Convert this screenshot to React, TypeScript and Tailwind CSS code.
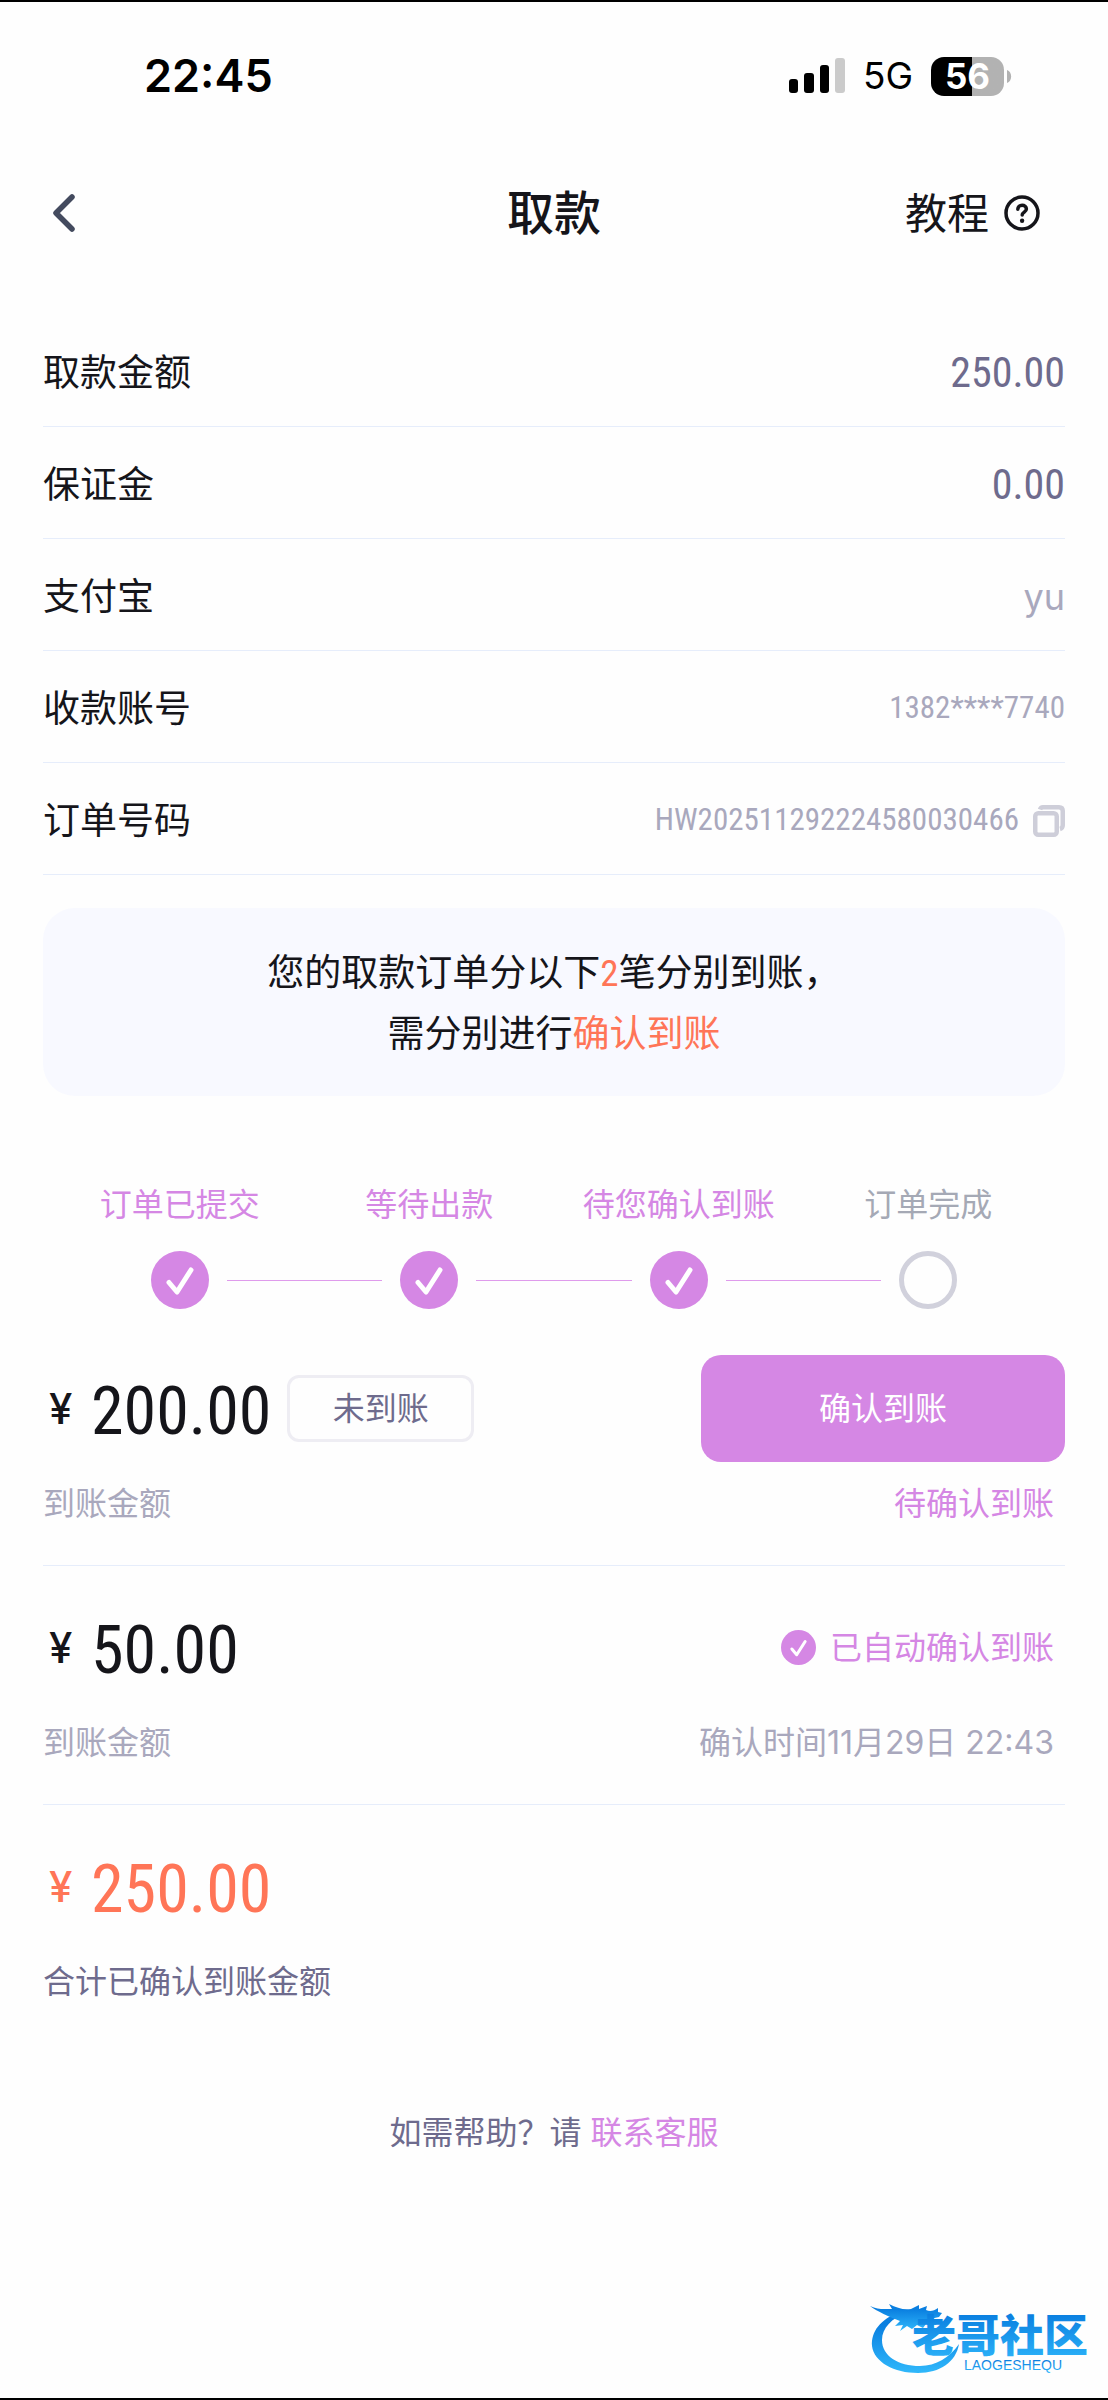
import type { ReactNode } from 'react';

type Step = { label: string; done: boolean };

const steps: Step[] = [
  { label: '订单已提交', done: true },
  { label: '等待出款', done: true },
  { label: '待您确认到账', done: true },
  { label: '订单完成', done: false },
];

// Condensed face used for money and order numbers
const digits = "font-['Roboto_Condensed','Open_Sans_Condensed','Noto_Sans_ExtraCondensed','Roboto',sans-serif]";

function StatusBar() {
  return (
    <div className="flex h-[150px] items-center justify-between border-t-2 border-black pr-24 pl-36 text-black">
      <span className="text-[45px] font-semibold">22:45</span>
      <div className="flex items-center">
        <svg width="56" height="36" viewBox="0 0 56 36" aria-hidden="true">
          <rect x="0" y="21" width="9" height="14" rx="3" />
          <rect x="15" y="15" width="10" height="20" rx="3" />
          <rect x="31" y="7" width="9" height="28" rx="3" />
          <rect x="46" y="0" width="10" height="35" rx="3" fill="#cbcbcb" />
        </svg>
        <span className="ml-[18px] text-[37px]">5G</span>
        <span className="ml-[18px] flex h-[39px] w-[73px] items-center justify-center rounded-[13px] bg-linear-to-r from-black from-56% to-[#b2b2b2] to-56% text-[35px] leading-[39px] font-bold text-white">
          56
        </span>
        <svg className="ml-[3px]" width="5" height="13" viewBox="0 0 5 13" fill="#b2b2b2" aria-hidden="true">
          <path d="M0 0c5.500 1.500 5.500 11.500 0 13z" />
        </svg>
      </div>
    </div>
  );
}

function Header() {
  return (
    <header className="grid h-[126px] grid-cols-3 items-center px-11 text-[#15151a]">
      <button type="button" aria-label="返回" className="justify-self-start px-2">
        <svg width="24" height="40" viewBox="0 0 24 40" fill="none" stroke="#434a5e" strokeWidth="5.500" strokeLinecap="round" strokeLinejoin="round">
          <path d="M20 4 4 20l16 16" />
        </svg>
      </button>
      <h1 className="text-center text-[47px] font-medium">取款</h1>
      <a href="#guide" className="flex items-center gap-[15px] justify-self-end pr-6 text-[42px]">
        教程
        <svg width="36" height="36" viewBox="0 0 36 36" fill="none" stroke="currentColor" strokeWidth="3.500" aria-hidden="true">
          <circle cx="18" cy="18" r="16" />
          <path d="M13.800 14.300c0-2.500 1.900-4 4.300-4s4.300 1.400 4.300 3.700c0 3-4.200 3.200-4.200 6" strokeLinecap="round" />
          <circle cx="18.100" cy="25.800" r="2.200" fill="currentColor" stroke="none" />
        </svg>
      </a>
    </header>
  );
}

function Row({ label, children }: { label: string; children: ReactNode }) {
  return (
    <div className="flex h-28 items-center justify-between border-b border-[#e6edfb] pt-1">
      <dt className="text-[37px] text-[#15151a]">{label}</dt>
      <dd className="flex items-center text-[#a9a8bd]">{children}</dd>
    </div>
  );
}

function CheckCircle({ className }: { className: string }) {
  return (
    <svg className={className} viewBox="0 0 58 58" fill="none" aria-hidden="true">
      <circle cx="29" cy="29" r="29" fill="#d587e4" />
      <path d="M18 31.500 26 41 40 19" stroke="#fff" strokeWidth="5" strokeLinecap="round" strokeLinejoin="round" />
    </svg>
  );
}

function Progress() {
  return (
    <ol className="mt-[85px] flex px-3">
      {steps.map((step, i) => (
        <li key={step.label} className="flex flex-1 flex-col items-center">
          <span className={`text-[32px] leading-12 whitespace-nowrap ${step.done ? 'text-[#d587e4]' : 'text-[#a5a9b5]'}`}>
            {step.label}
          </span>
          <div className="mt-[22px] flex w-full items-center gap-[18px]">
            <span className={`h-px flex-1 ${i > 0 ? 'bg-[#df9bec]' : ''}`} />
            {step.done ? (
              <CheckCircle className="size-[58px]" />
            ) : (
              <span className="size-[58px] rounded-full border-5 border-[#d1d1dc]" />
            )}
            <span className={`h-px flex-1 ${i < steps.length - 1 ? 'bg-[#df9bec]' : ''}`} />
          </div>
        </li>
      ))}
    </ol>
  );
}

function Amount({ value }: { value: string }) {
  return (
    <span className="flex items-center">
      <span className="w-12 pl-1.5 text-[42px] font-medium">¥</span>
      <span className={`${digits} pt-1.5 text-[66px] leading-none`}>{value}</span>
    </span>
  );
}

function Payment({ value, badge, action, note }: { value: string; badge?: ReactNode; action: ReactNode; note: ReactNode }) {
  return (
    <section className="border-b border-[#e6edfb] pt-7 pb-[37px]">
      <div className="flex h-[107px] items-center justify-between text-[#15151a]">
        <div className="flex items-center gap-4">
          <Amount value={value} />
          {badge}
        </div>
        {action}
      </div>
      <div className="mt-[18px] flex justify-between pr-[11px] text-[32px] leading-12 text-[#a9a8bd]">
        <span>到账金额</span>
        {note}
      </div>
    </section>
  );
}

function Watermark() {
  return (
    <svg className="absolute right-4 bottom-6 h-20 w-[226px] overflow-visible" viewBox="0 0 226 80" aria-label="老哥社区">
      <defs>
        <linearGradient id="wave" x1="0" y1="0" x2="0" y2="1">
          <stop offset="0.200" stopColor="#0a7fe0" />
          <stop offset="1" stopColor="#30b8fb" />
        </linearGradient>
      </defs>
      <g fill="url(#wave)">
        <path d="M34 18C14 25 5 38 6 52c2 16 22 27 46 27 22 0 38-11 41-29-9 13-23 22-39 22-22 0-38-10-38-26 0-12 10-22 24-27z" />
        <path d="M4 12c8 4 14 3 22 3l-3-5c8 4 14 6 22 5l8-4v4l8-3-1 4c4 2 8 1 12-2v4l4 1-3 4-9 2 9 1-3 5-10-1-3 4-6-3-5 4-5-3-7 5 3-6-8 1 5-5C22 22 12 18 4 12z" />
      </g>
      <g fill="url(#wave)">
        <text x="46" y="58" fontSize="44" fontWeight="900" className="font-['Noto_Sans_CJK_SC',sans-serif]">老哥社区</text>
        <text x="98" y="76" fontSize="14" className="font-['Liberation_Sans',sans-serif]">LAOGESHEQU</text>
      </g>
    </svg>
  );
}

export default function App() {
  return (
    <div className="relative min-h-screen border-b-2 border-black bg-[#fefefe] font-['Inter','Noto_Sans_CJK_SC',sans-serif]">
      <StatusBar />
      <Header />

      <main className="px-[43px]">
        <dl className="mt-[39px]">
          <Row label="取款金额">
            <span className={`${digits} text-[42px] text-[#6e6b8d]`}>250.00</span>
          </Row>
          <Row label="保证金">
            <span className={`${digits} text-[42px] text-[#6e6b8d]`}>0.00</span>
          </Row>
          <Row label="支付宝">
            <span className="text-[36px]">yu</span>
          </Row>
          <Row label="收款账号">
            <span className={`${digits} text-[31px]`}>1382****7740</span>
          </Row>
          <Row label="订单号码">
            <span className={`${digits} text-[31px]`}>HW202511292224580030466</span>
            <button type="button" aria-label="复制" className="ml-3.5">
              <svg width="32" height="32" viewBox="0 0 32 32" fill="none" stroke="#ceced9" strokeWidth="4.500">
                <rect x="2.250" y="8.250" width="21.500" height="21.500" rx="3" />
                <path d="M7 4.500C7.500 2.800 8.500 2.250 10 2.250h16c2.500 0 3.750 1.250 3.750 3.750v14c0 2-.8 3.500-2.750 4" />
              </svg>
            </button>
          </Row>
        </dl>

        <p className="mt-[33px] rounded-[32px] bg-[#f8f9ff] pt-[35px] pb-8 text-center text-[37px] leading-[60px] text-[#15151a]">
          您的取款订单分以下
          <span className={`${digits} text-[#ff7557]`}>2</span>
          笔分别到账，
          <br />
          需分别进行<span className="text-[#ff7557]">确认到账</span>
        </p>

        <Progress />

        <div className="mt-[18px]">
          <Payment
            value="200.00"
            badge={
              <span className="flex h-[67px] w-[187px] items-center justify-center rounded-xl border-3 border-[#eeedf3] text-[32px] text-[#6e6b8d]">
                未到账
              </span>
            }
            action={
              <button type="button" className="h-full w-[364px] rounded-[20px] bg-[#d587e4] text-[32px] text-white">
                确认到账
              </button>
            }
            note={<span className="text-[#d587e4]">待确认到账</span>}
          />
          <Payment
            value="50.00"
            action={
              <span className="flex items-center gap-3.5 pr-[11px] text-[32px] text-[#d587e4]">
                <CheckCircle className="size-[35px]" />
                已自动确认到账
              </span>
            }
            note={<span>确认时间11月29日 22:43</span>}
          />
        </div>

        <section className="pt-7">
          <div className="flex h-[107px] items-center text-[#ff7557]">
            <Amount value="250.00" />
          </div>
          <p className="mt-[18px] text-[32px] leading-12 text-[#6e6b8d]">合计已确认到账金额</p>
        </section>

        <p className="mt-[103px] text-center text-[32px] leading-12 text-[#6e6b8d]">
          如需帮助？请{' '}
          <a href="#service" className="text-[#d587e4]">联系客服</a>
        </p>
      </main>

      <Watermark />
    </div>
  );
}
